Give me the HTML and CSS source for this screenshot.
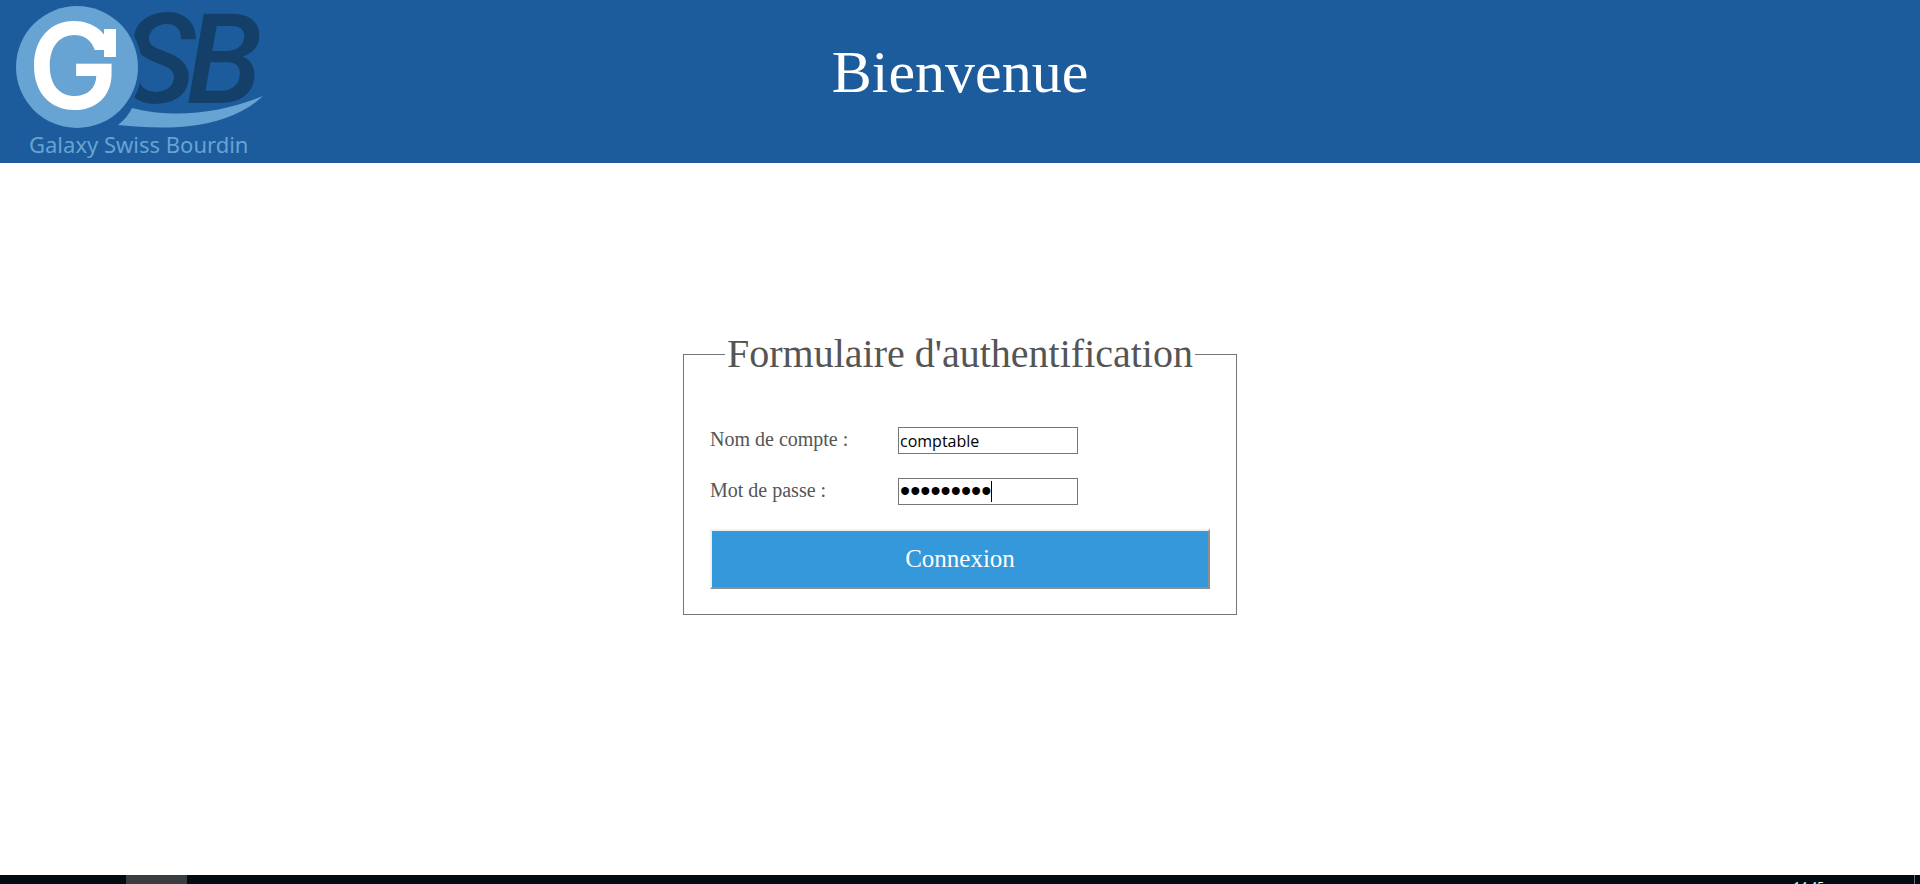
FILE: index.html
```html
<!DOCTYPE html>
<html lang="fr">
<head>
<meta charset="utf-8">
<title>Galaxy Swiss Bourdin</title>
<link rel="stylesheet" href="styles.css">
</head>
<body>
<header class="banner">
  <svg class="logo" viewBox="0 0 280 163" role="img" aria-label="Galaxy Swiss Bourdin">
    <text class="logo-sb" x="122" y="103">S</text>
    <text class="logo-sb" x="186" y="103">B</text>
    <circle class="logo-gap" cx="77" cy="67" r="65"/>
    <circle class="logo-light" cx="77" cy="67" r="61"/>
    <text class="logo-g" x="28" y="109">G</text>
    <rect class="logo-serif" x="104" y="29" width="12" height="28"/>
    <path class="logo-light" d="M132 108C174 119 222 113 263 96C245 113 218 123 190 126C163 129 141 127 118 125Q128 117 132 108Z"/>
    <text class="logo-caption" x="29" y="153">Galaxy Swiss Bourdin</text>
  </svg>
  <h1 class="title">Bienvenue</h1>
</header>
<main class="content">
  <form class="login">
    <fieldset class="panel">
      <legend class="legend">Formulaire d'authentification</legend>
      <div class="row">
        <label class="label" for="compte">Nom de compte :</label>
        <input class="field" id="compte" type="text" value="comptable">
      </div>
      <div class="row">
        <label class="label" for="passe">Mot de passe :</label>
        <div class="secret">
          <input class="field field-secret" id="passe" type="password" value="comptable">
          <span class="caret"></span>
        </div>
      </div>
      <button class="submit" type="submit">Connexion</button>
    </fieldset>
  </form>
</main>
<footer class="taskbar">
  <div class="task-active"></div>
  <div class="clock">14:45</div>
  <div class="desktop-edge"></div>
</footer>
</body>
</html>
```
FILE: styles.css
```css
* { box-sizing: border-box; }
body {
  margin: 0;
  min-height: 100vh;
  display: flex;
  flex-direction: column;
  background: #fff;
  color: #555;
  font-family: "Liberation Serif", "Times New Roman", serif;
}
.banner {
  display: grid;
  grid-template-columns: 280px 1fr 280px;
  background: #1c5c9c;
}
.logo { display: block; width: 100%; }
.logo-light { fill: #67a3d3; }
.logo-gap { fill: #1c5c9c; }
.logo-serif { fill: #fff; }
.logo-sb {
  fill: #133f69;
  font: italic 500 125px Roboto, sans-serif;
}
.logo-g {
  fill: #fff;
  font: 600 120px Inter, sans-serif;
}
.logo-caption {
  fill: #67a3d3;
  font: 22px "Noto Sans", sans-serif;
}
.title {
  margin: 37px 0 0;
  color: #fff;
  font-size: 60px;
  font-weight: 400;
  line-height: 70px;
  text-align: center;
}
.content {
  flex: 1;
  display: flex;
  justify-content: center;
  align-items: flex-start;
  padding: 168px 16px 40px;
}
.panel {
  width: 554px;
  max-width: 100%;
  margin: 0;
  padding: 50px 26px 25px;
  border: 1px solid #767676;
}
.legend {
  margin: 0 auto;
  padding: 0 2px;
  font-size: 40px;
  line-height: 46px;
}
.row {
  display: flex;
  align-items: flex-start;
  margin-bottom: 24px;
}
.label {
  width: 188px;
  font-size: 20px;
  line-height: 24px;
}
.field {
  display: block;
  width: 180px;
  height: 27px;
  padding: 1px;
  border: 1px solid #767676;
  border-radius: 0;
  outline: 0;
  background: #fff;
  color: #000;
  font: 16px "Open Sans", sans-serif;
}
.field-secret { font: 29px "Liberation Sans", sans-serif; }
.secret { position: relative; }
.caret {
  position: absolute;
  top: 3px;
  left: 93px;
  width: 1px;
  height: 21px;
  background: #000;
}
.submit {
  display: block;
  width: 100%;
  height: 60px;
  border: 2px solid;
  border-color: #f0f0f0 #8f8f8f #8f8f8f #f0f0f0;
  border-radius: 0;
  background: #3498db;
  color: #fff;
  font: 25px "Liberation Serif", "Times New Roman", serif;
}
.taskbar {
  display: flex;
  height: 9px;
  padding: 0 5px 0 126px;
  overflow: hidden;
  background: #030b12;
}
.task-active { width: 61px; background: #3a3d40; }
.clock {
  margin: 5px 90px 0 auto;
  color: #fff;
  font: 12px/14px "Open Sans", sans-serif;
}
.desktop-edge { width: 1px; background: #6a6e72; }
```
